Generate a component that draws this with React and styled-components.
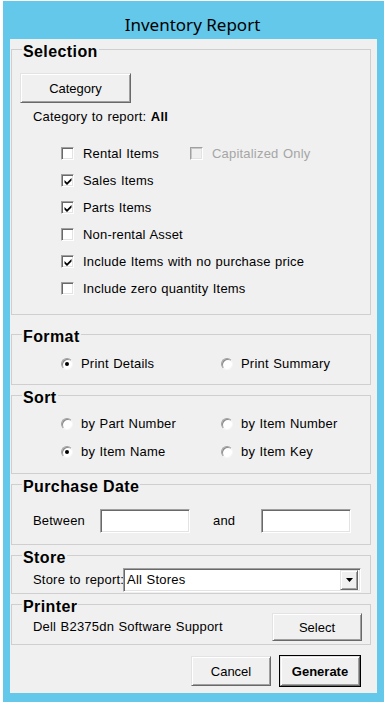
import styled, { createGlobalStyle } from "styled-components";

const GlobalStyle = createGlobalStyle`
	body {
		margin: 0;
		background: #ffffff;
		font-family: "Liberation Sans", Arial, sans-serif;
	}
`;

const Window = styled.div`
	box-sizing: border-box;
	width: 381px;
	height: 701px;
	margin: 1px 0 0 3px;
	padding: 0 7px 9px 7px;
	background: #63c8e9;
	display: flex;
	flex-direction: column;
`;

const TitleBar = styled.div`
	height: 38px;
	box-sizing: border-box;
	padding-top: 12px;
	text-align: center;
	font-family: "Noto Sans", "Open Sans", sans-serif;
	font-size: 17px;
	line-height: 24px;
	color: #000;
	margin-left: -2px;
`;

const Client = styled.div`
	flex: 1;
	background: #f0f0f0;
	padding: 0 6px 0 1px;
	display: flex;
	flex-direction: column;
	font-size: 13px;
	letter-spacing: 0.2px;
	word-spacing: 0.6px;
	color: #000;
`;

const Group = styled.fieldset`
	box-sizing: border-box;
	margin: ${(p) => p.$mt || 0}px 0 0 0;
	padding: 0;
	height: ${(p) => p.$h}px;
	min-width: 0;
	border: 1px solid #cfcfcf;
	display: flex;
	flex-direction: column;
`;

const Caption = styled.legend`
	margin-left: 10px;
	padding: 5px 1px 0 1px;
	font-weight: bold;
	font-size: 16px;
	line-height: 16px;
	letter-spacing: 0.4px;
	word-spacing: 0;
`;

const RaisedButton = styled.button`
	box-sizing: border-box;
	width: ${(p) => p.$w}px;
	height: ${(p) => p.$h || 30}px;
	margin: 0;
	padding: 0;
	background: #f0f0f0;
	font-family: "Liberation Sans", Arial, sans-serif;
	font-size: 13px;
	font-weight: ${(p) => (p.$default ? "bold" : "normal")};
	color: #000;
	border: 1px solid;
	border-color: #e3e3e3 #696969 #696969 #e3e3e3;
	box-shadow: inset 1px 1px 0 #ffffff, inset -1px -1px 0 #a0a0a0
		${(p) => (p.$default ? ", 0 0 0 1px #000" : "")};
	cursor: pointer;
`;

const CategoryButton = styled(RaisedButton)`
	margin: 13px 0 0 8px;
`;

const CategoryLine = styled.div`
	margin: 6px 0 0 21px;
	line-height: 16px;
	b {
		font-weight: bold;
	}
`;

const CheckGrid = styled.div`
	margin: 15px 0 0 49px;
	display: grid;
	grid-template-columns: 129px auto;
	grid-auto-rows: 27px;
	align-items: center;
`;

const Option = styled.label`
	display: flex;
	align-items: center;
	gap: ${(p) => p.$gap || 9}px;
	line-height: 16px;
	color: ${(p) => (p.$disabled ? "#a6a6a6" : "#000")};
	white-space: nowrap;
`;

const Box = styled.span`
	box-sizing: border-box;
	width: 13px;
	height: 13px;
	flex: none;
	display: flex;
	align-items: center;
	justify-content: center;
	background: ${(p) => (p.$disabled ? "#f0f0f0" : "#ffffff")};
	border: 1px solid;
	border-color: #a0a0a0 #ffffff #ffffff #a0a0a0;
	box-shadow: inset 1px 1px 0 ${(p) => (p.$disabled ? "#c8c8c8" : "#696969")},
		inset -1px -1px 0 #e3e3e3;
`;

const Round = styled.span`
	box-sizing: border-box;
	width: 12px;
	height: 12px;
	flex: none;
	border-radius: 50%;
	display: flex;
	align-items: center;
	justify-content: center;
	background: #ffffff;
	border: 1px solid;
	border-color: #a0a0a0 #f6f6f6 #f6f6f6 #a0a0a0;
	box-shadow: inset 1px 1px 0 #8a8a8a;
	&::after {
		content: "";
		display: ${(p) => (p.$on ? "block" : "none")};
		width: 4px;
		height: 4px;
		border-radius: 50%;
		background: #000;
	}
`;

const RadioGrid = styled.div`
	margin: ${(p) => p.$mt}px 0 0 49px;
	display: grid;
	grid-template-columns: 160px auto;
	grid-auto-rows: 28px;
	align-items: start;
`;

const DateRow = styled.div`
	margin: 14px 0 0 21px;
	display: flex;
	align-items: center;
	line-height: 16px;
`;

const Sunken = styled.div`
	box-sizing: border-box;
	height: 24px;
	width: ${(p) => p.$w}px;
	background: #ffffff;
	border: 1px solid;
	border-color: #a0a0a0 #ffffff #ffffff #a0a0a0;
	box-shadow: inset 1px 1px 0 #696969, inset -1px -1px 0 #e3e3e3;
`;

const DateField = styled(Sunken)`
	margin-left: ${(p) => p.$ml}px;
`;

const AndLabel = styled.span`
	margin-left: 23px;
`;

const StoreRow = styled.div`
	margin: 2px 0 0 21px;
	display: flex;
	align-items: center;
	line-height: 16px;
`;

const Combo = styled(Sunken)`
	display: flex;
	align-items: center;
	justify-content: space-between;
	padding: 2px;
	margin-left: -1px;
	span {
		padding-left: 1px;
	}
`;

const DropButton = styled.span`
	box-sizing: border-box;
	width: 18px;
	height: 20px;
	display: flex;
	align-items: center;
	justify-content: center;
	background: #f0f0f0;
	border: 1px solid;
	border-color: #e3e3e3 #696969 #696969 #e3e3e3;
	box-shadow: inset 1px 1px 0 #ffffff, inset -1px -1px 0 #a0a0a0;
`;

const PrinterRow = styled.div`
	margin: -2px 0 0 21px;
	display: flex;
	align-items: center;
	justify-content: space-between;
	padding-right: 8px;
	line-height: 16px;
`;

const Footer = styled.div`
	margin: 11px 11px 0 0;
	display: flex;
	justify-content: flex-end;
	gap: 9px;
`;

function CheckMark() {
	return (
		<svg width="8" height="8" viewBox="0 0 8 8">
			<path d="M0.5 3 L3 5.5 L7.5 1 L7.5 3.5 L3 8 L0.5 5.5 Z" fill="#000" />
		</svg>
	);
}

function Check({ label, checked, disabled }) {
	return (
		<Option $disabled={disabled}>
			<Box $disabled={disabled}>{checked && <CheckMark />}</Box>
			{label}
		</Option>
	);
}

function Radio({ label, on }) {
	return (
		<Option $gap={8}>
			<Round $on={on} />
			{label}
		</Option>
	);
}

function App() {
	return (
		<>
			<GlobalStyle />
			<Window>
				<TitleBar>Inventory Report</TitleBar>
				<Client>
					<Group $h={276}>
						<Caption>Selection</Caption>
						<div>
							<CategoryButton $w={111}>Category</CategoryButton>
						</div>
						<CategoryLine>
							Category to report: <b>All</b>
						</CategoryLine>
						<CheckGrid>
							<Check label="Rental Items" />
							<Check label="Capitalized Only" disabled />
							<Check label="Sales Items" checked />
							<span />
							<Check label="Parts Items" checked />
							<span />
							<Check label="Non-rental Asset" />
							<span />
							<Check label="Include Items with no purchase price" checked />
							<span />
							<Check label="Include zero quantity Items" />
						</CheckGrid>
					</Group>

					<Group $h={61} $mt={9}>
						<Caption>Format</Caption>
						<RadioGrid $mt={11}>
							<Radio label="Print Details" on />
							<Radio label="Print Summary" />
						</RadioGrid>
					</Group>

					<Group $h={89}>
						<Caption>Sort</Caption>
						<RadioGrid $mt={10}>
							<Radio label="by Part Number" />
							<Radio label="by Item Number" />
							<Radio label="by Item Name" on />
							<Radio label="by Item Key" />
						</RadioGrid>
					</Group>

					<Group $h={71}>
						<Caption>Purchase Date</Caption>
						<DateRow>
							<span>Between</span>
							<DateField $w={90} $ml={15} />
							<AndLabel>and</AndLabel>
							<DateField $w={90} $ml={26} />
						</DateRow>
					</Group>

					<Group $h={49}>
						<Caption>Store</Caption>
						<StoreRow>
							<span>Store to report:</span>
							<Combo $w={238}>
								<span>All Stores</span>
								<DropButton>
									<svg width="7" height="4" viewBox="0 0 7 4">
										<path d="M0 0 H7 L3.5 4 Z" fill="#000" />
									</svg>
								</DropButton>
							</Combo>
						</StoreRow>
					</Group>

					<Group $h={51}>
						<Caption>Printer</Caption>
						<PrinterRow>
							<span>Dell B2375dn Software Support</span>
							<RaisedButton $w={90} $h={28}>
								Select
							</RaisedButton>
						</PrinterRow>
					</Group>

					<Footer>
						<RaisedButton $w={80}>Cancel</RaisedButton>
						<RaisedButton $w={80} $default>
							Generate
						</RaisedButton>
					</Footer>
				</Client>
			</Window>
		</>
	);
}

export default App;
